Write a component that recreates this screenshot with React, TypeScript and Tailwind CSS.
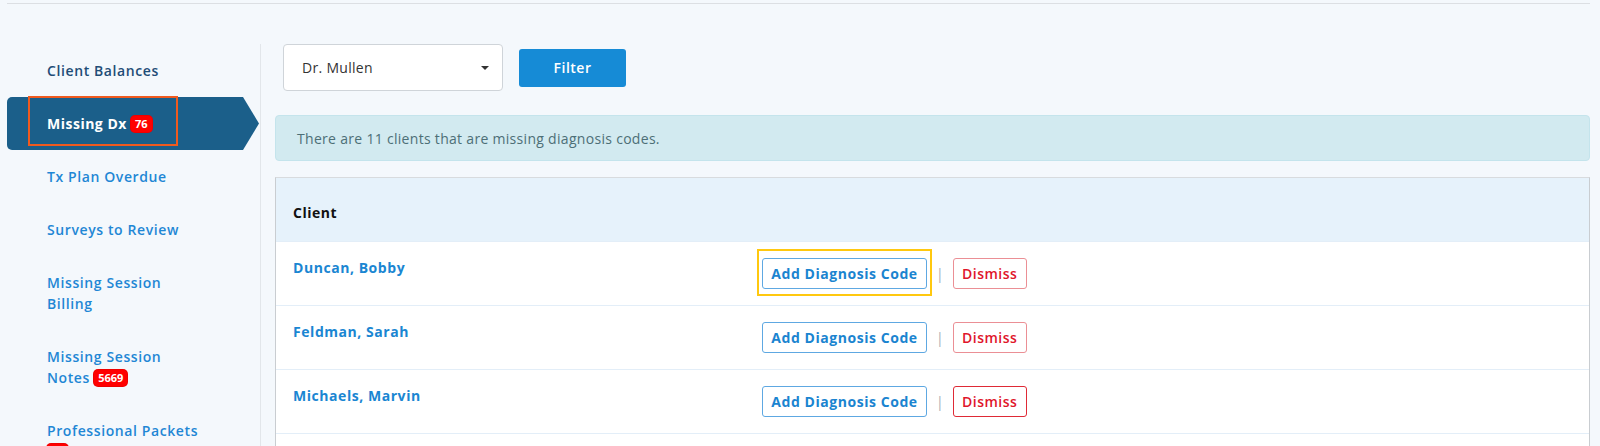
import React from "react";

const font = { fontFamily: '"Open Sans", "Liberation Sans", sans-serif' };

function Badge({ n }: { n: string }) {
  return (
    <span className="inline-flex h-[16px] items-center rounded-[4px] bg-[#ff0000] px-[4px] align-[1px] text-[11px] leading-none font-bold tracking-normal text-white shadow-[0_0_0_1px_#e00]">
      {n}
    </span>
  );
}

function SideItem({ children, dark }: { children: React.ReactNode; dark?: boolean }) {
  return (
    <div
      className={`py-4 pl-[40px] pr-[20px] text-[14px] leading-[21px] font-semibold tracking-[0.6px] ${
        dark ? "text-[#1f4d77]" : "text-[#1f87d5]"
      }`}
    >
      {children}
    </div>
  );
}

const rows = ["Duncan, Bobby", "Feldman, Sarah", "Michaels, Marvin"];

export default function App() {
  return (
    <div className="min-h-screen bg-[#f4f8fc]" style={font}>
      <div className="ml-[7px] mr-[10px] pt-[3px]">
        <div className="border-t border-[#dcdfe3]" />
      </div>
      <div className="flex pt-[40px] pl-[7px] pr-[10px]">
        {/* Sidebar */}
        <div className="w-[254px] shrink-0 border-r border-[#e2e6ea]">
          <SideItem dark>Client Balances</SideItem>
          <div className="relative flex">
            <div className="w-[236px] rounded-l-[5px] bg-[#1b5f8a] py-4 pl-[40px] text-[14px] leading-[21px] font-bold tracking-[0.5px] text-white">
              Missing Dx <Badge n="76" />
            </div>
            <svg width="17" height="53" viewBox="0 0 17 53" className="block">
              <polygon points="0,0 0,53 16,26.5" fill="#1b5f8a" />
            </svg>
            <div className="pointer-events-none absolute left-[21px] top-[-1px] h-[50px] w-[150px] border-2 border-[#f05a1e]" />
          </div>
          <SideItem>Tx Plan Overdue</SideItem>
          <SideItem>Surveys to Review</SideItem>
          <SideItem>
            Missing Session
            <br />
            Billing
          </SideItem>
          <SideItem>
            Missing Session
            <br />
            Notes <Badge n="5669" />
          </SideItem>
          <SideItem>
            Professional Packets
            <br />
            <Badge n="12" />
          </SideItem>
        </div>

        {/* Main */}
        <div className="flex-1 pl-[14px]">
          <div className="flex items-center pl-[8px]">
            <div className="flex h-[47px] w-[220px] items-center justify-between rounded-[4px] border border-[#cfd4d9] bg-white pl-[18px] pr-[12px] text-[14px] tracking-[0.3px] text-[#333]">
              <span>Dr. Mullen</span>
              <svg width="10" height="6" viewBox="0 0 10 6">
                <polygon points="1,1 9,1 5,5" fill="#333" />
              </svg>
            </div>
            <button className="ml-[16px] h-[38px] w-[107px] rounded-[3px] bg-[#168bd6] text-[14px] font-semibold tracking-[0.5px] text-white">
              Filter
            </button>
          </div>

          <div className="mt-[24px] flex h-[46px] items-center rounded-[4px] border border-[#c4e4ec] bg-[#d2eaf0] pl-[21px] text-[14px] tracking-[0.3px] text-[#4d6f77]">
            There are 11 clients that are missing diagnosis codes.
          </div>

          <div className="mt-[16px] border-x border-t border-x-[#c9cdd1] border-t-[#d8dbde] bg-white">
            <div className="h-[63px] bg-[#e6f2fb] pl-[17px] pt-[24px] text-[14px] leading-[21px] font-bold tracking-[0.5px] text-[#111]">
              Client
            </div>
            {rows.map((name, i) => (
              <div key={name} className="flex h-[64px] border-t border-[#e3eef8]">
                <div className="w-[469px] pl-[17px] pt-[15px] text-[14px] leading-[21px] font-bold tracking-[0.55px] text-[#1a86d2]">
                  {name}
                </div>
                <div className="flex items-center pl-[17px]">
                  <div className="relative">
                    <button className="h-[31px] w-[165px] rounded-[3px] border border-[#5ea8e2] bg-white text-[14px] font-bold tracking-[0.55px] text-[#1a84d0]">
                      Add Diagnosis Code
                    </button>
                    {i === 0 && (
                      <div className="pointer-events-none absolute left-[-5px] top-[-9px] h-[47px] w-[175px] border-2 border-[#ffc80f]" />
                    )}
                  </div>
                  <span className="mx-[9px] text-[14px] text-[#a9b0b6]">|</span>
                  <button
                    className={`h-[31px] w-[74px] rounded-[3px] border bg-white text-[14px] font-semibold tracking-[0.5px] text-[#e0162b] ${
                      i === 2 ? "border-[#df2a36]" : "border-[#eb8f95]"
                    }`}
                  >
                    Dismiss
                  </button>
                </div>
              </div>
            ))}
            <div className="h-[64px] border-t border-[#e3eef8]" />
          </div>
        </div>
      </div>
    </div>
  );
}
